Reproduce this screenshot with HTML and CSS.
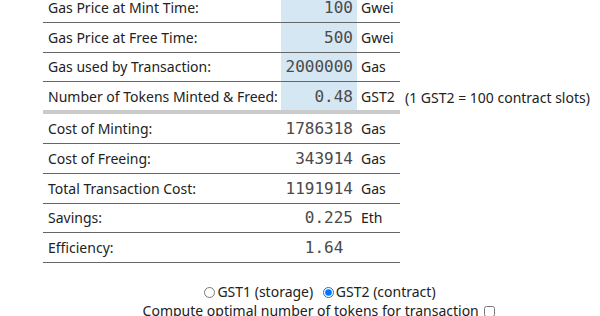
FILE: index.html
```html
<!DOCTYPE html>
<html lang="en">
<head>
    <meta charset="UTF-8">
    <title>Gas Token Calculator</title>
    <link rel="stylesheet" href="styles.css">
</head>
<body>
    <div class="calc">
        <table class="grid">
            <tbody class="inputs">
                <tr>
                    <td class="label">Gas Price at Mint Time:</td>
                    <td class="val field">100</td>
                    <td class="unit">Gwei</td>
                    <td class="note"></td>
                </tr>
                <tr>
                    <td class="label">Gas Price at Free Time:</td>
                    <td class="val field">500</td>
                    <td class="unit">Gwei</td>
                    <td class="note"></td>
                </tr>
                <tr>
                    <td class="label">Gas used by Transaction:</td>
                    <td class="val field">2000000</td>
                    <td class="unit">Gas</td>
                    <td class="note"></td>
                </tr>
                <tr class="split">
                    <td class="label">Number of Tokens Minted &amp; Freed:</td>
                    <td class="val field">0.48</td>
                    <td class="unit">GST2</td>
                    <td class="note">(1 GST2 = 100 contract slots)</td>
                </tr>
            </tbody>
            <tbody class="outputs">
                <tr>
                    <td class="label">Cost of Minting:</td>
                    <td class="val">1786318</td>
                    <td class="unit">Gas</td>
                    <td class="note"></td>
                </tr>
                <tr>
                    <td class="label">Cost of Freeing:</td>
                    <td class="val">343914</td>
                    <td class="unit">Gas</td>
                    <td class="note"></td>
                </tr>
                <tr>
                    <td class="label">Total Transaction Cost:</td>
                    <td class="val">1191914</td>
                    <td class="unit">Gas</td>
                    <td class="note"></td>
                </tr>
                <tr>
                    <td class="label">Savings:</td>
                    <td class="val">0.225</td>
                    <td class="unit">Eth</td>
                    <td class="note"></td>
                </tr>
                <tr>
                    <td class="label">Efficiency:</td>
                    <td class="val">1.64&nbsp;</td>
                    <td class="unit"></td>
                    <td class="note"></td>
                </tr>
            </tbody>
        </table>

        <div class="options">
            <div class="token-type">
                <label><input type="radio" name="token" value="gst1">GST1 (storage)</label>
                <label><input type="radio" name="token" value="gst2" checked>GST2 (contract)</label>
            </div>
            <div class="optimal">
                <label>Compute optimal number of tokens for transaction <input type="checkbox"></label>
            </div>
        </div>
    </div>
</body>
</html>
```

FILE: styles.css
```css
body {
    margin: 0;
    font-family: 'Noto Sans', 'Open Sans', sans-serif;
    font-size: 14px;
    color: #222;
    background-color: #fff;
}
.calc {
    padding-left: 43px;
    margin-top: -7px;
}
.grid {
    border-collapse: collapse;
}
.grid td {
    height: 28.8px;
    padding: 0;
    border-bottom: 1px solid #666;
    white-space: nowrap;
}
.grid td.label {
    width: 233px;
    padding-left: 5px;
}
.grid td.val {
    width: 72px;
    padding-right: 4px;
    text-align: right;
    font-family: 'DejaVu Sans Mono', 'Liberation Mono', monospace;
    font-size: 16px;
    color: #4a4a4a;
}
.grid td.field {
    background-color: #d6e7f4;
}
.grid td.unit {
    width: 39px;
    padding-left: 4px;
}
.grid td.note {
    border-bottom: none;
    padding-left: 5px;
}
.grid tr.split td {
    height: 27.8px;
    border-bottom: 4px solid #cbcbcb;
}
.grid tr.split td.note {
    border-bottom: none;
}
.options {
    margin-top: 19px;
    margin-left: -3px;
    text-align: center;
    line-height: 19px;
}
.options input {
    margin: 0 2px 0 0;
    vertical-align: -1px;
    width: 11px;
    height: 11px;
}
.token-type label + label {
    margin-left: 6px;
}
.optimal input {
    margin-left: 2px;
}
```
